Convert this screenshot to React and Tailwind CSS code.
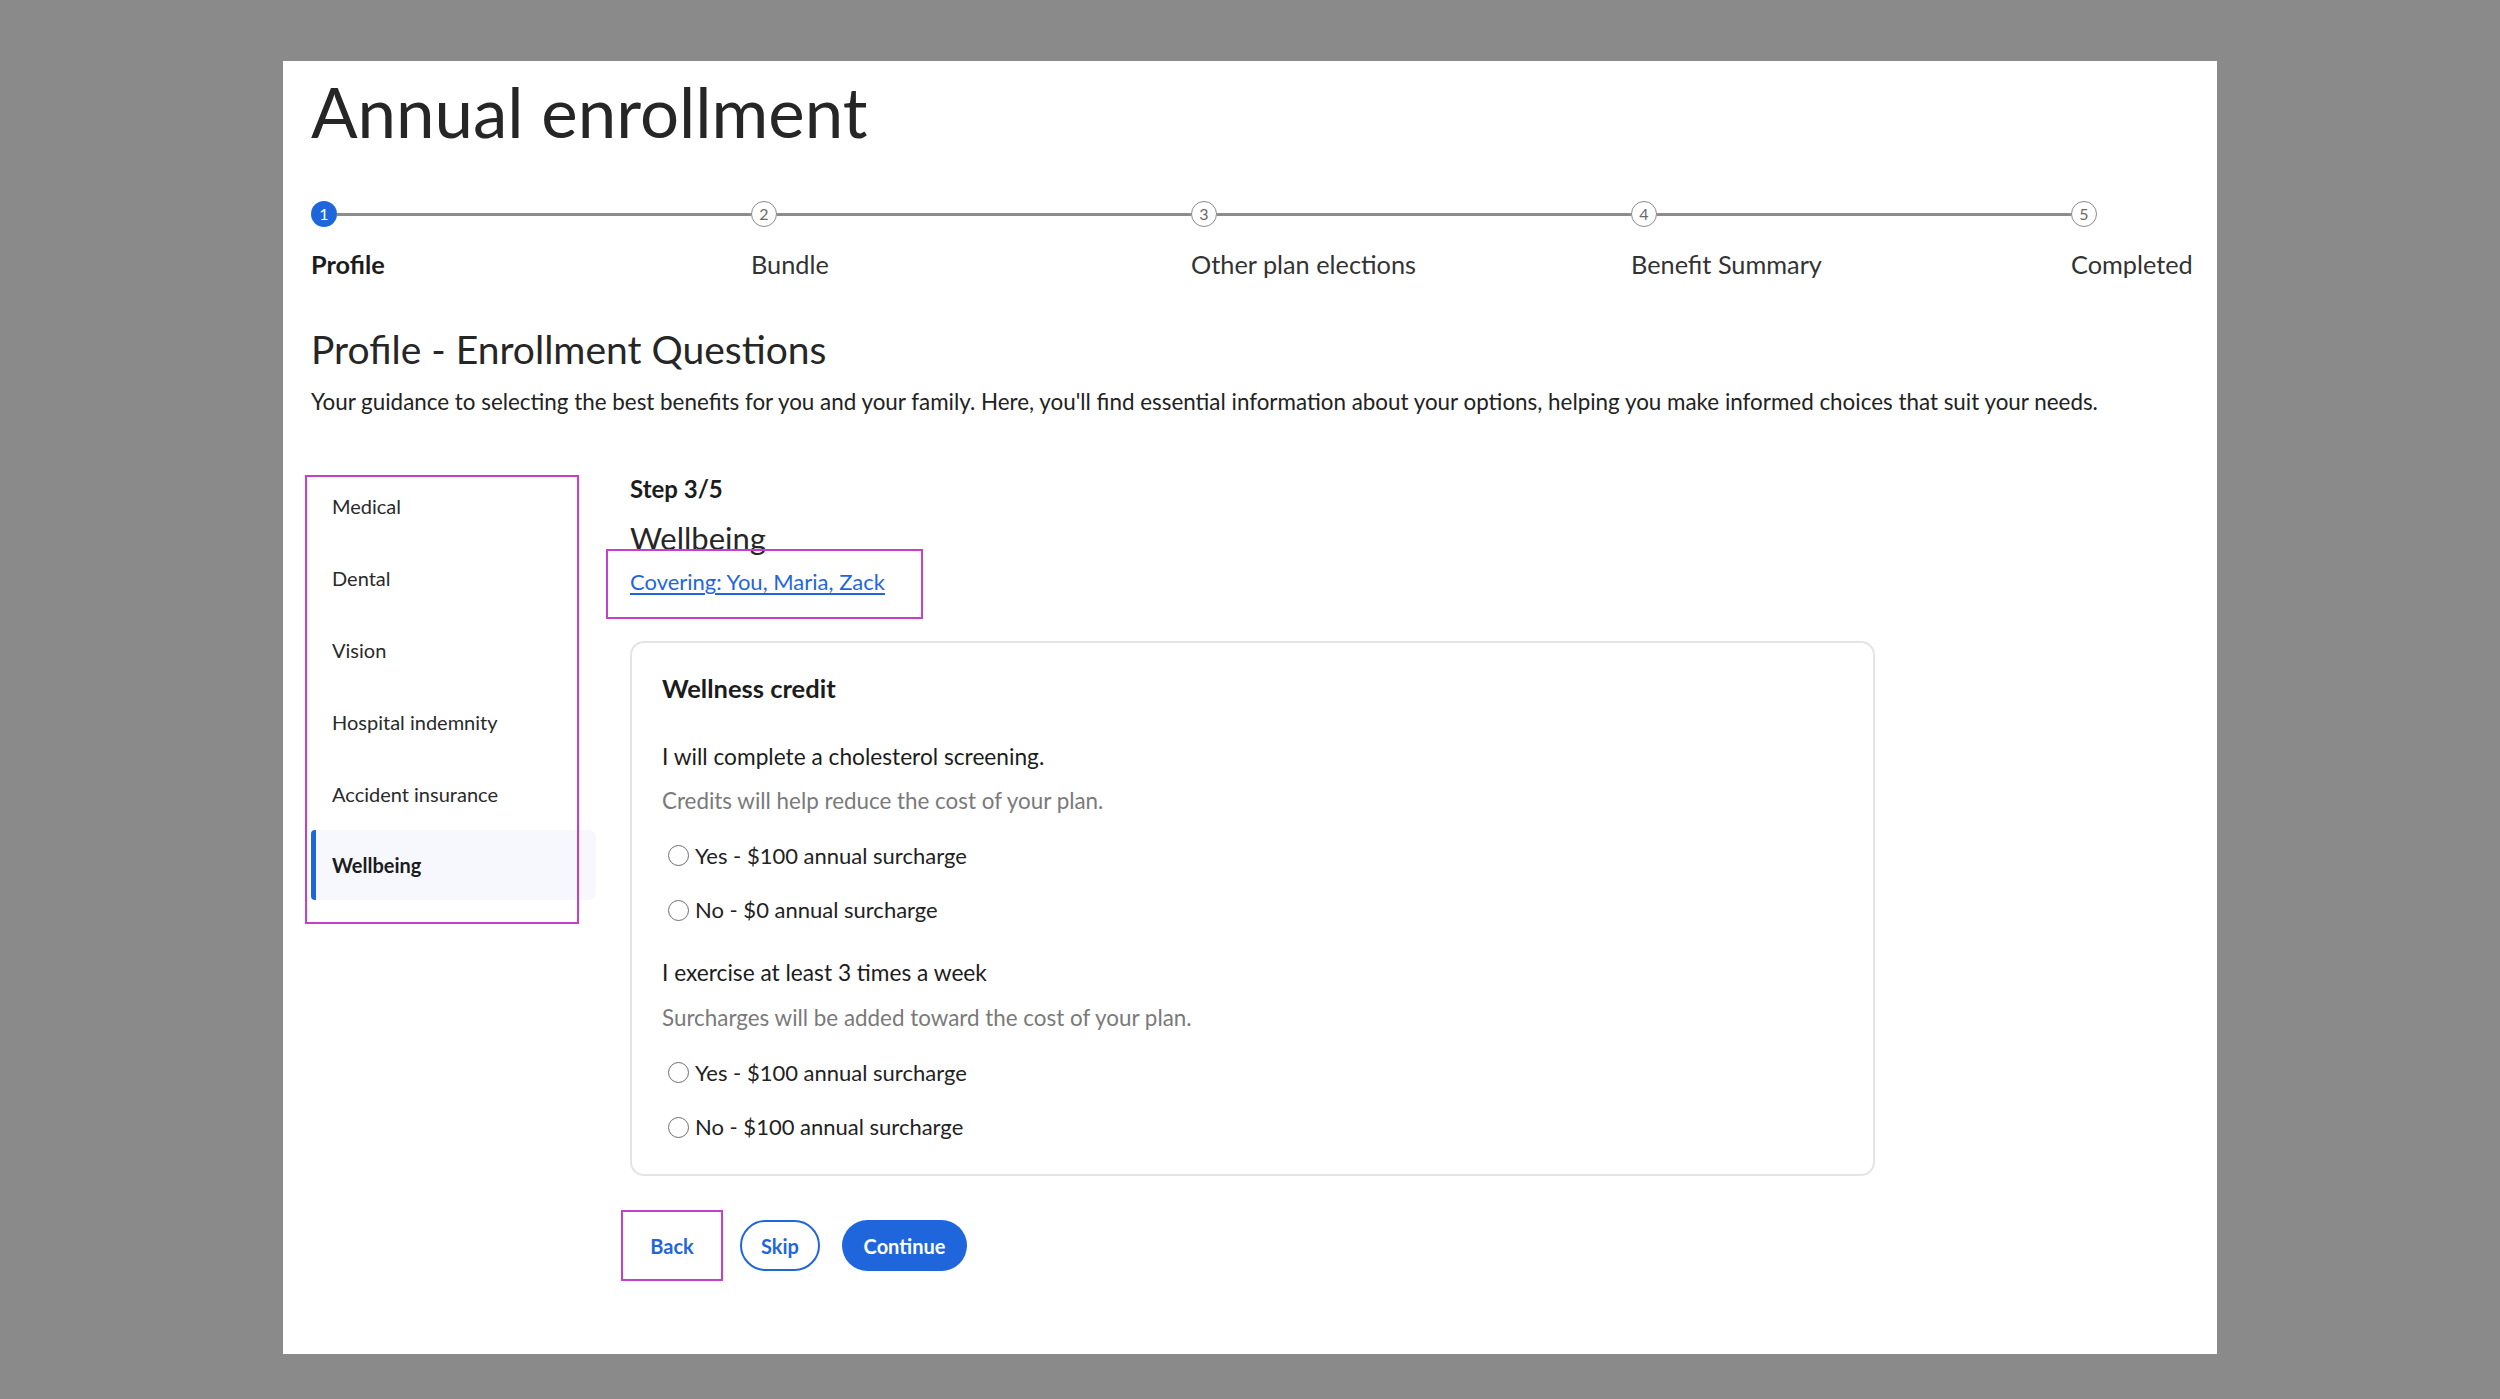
const steps = ['Profile', 'Bundle', 'Other plan elections', 'Benefit Summary', 'Completed']
const navItems = ['Medical', 'Dental', 'Vision', 'Hospital indemnity', 'Accident insurance', 'Wellbeing']

const questions = [
  {
    title: 'I will complete a cholesterol screening.',
    hint: 'Credits will help reduce the cost of your plan.',
    options: ['Yes - $100 annual surcharge', 'No - $0 annual surcharge'],
  },
  {
    title: 'I exercise at least 3 times a week',
    hint: 'Surcharges will be added toward the cost of your plan.',
    options: ['Yes - $100 annual surcharge', 'No - $100 annual surcharge'],
  },
]

function StepCircle({ n, active }) {
  return (
    <div
      className={`w-[26px] h-[26px] shrink-0 rounded-full flex items-center justify-center text-[16px] leading-none ${
        active ? 'bg-[#1f66dd] text-white' : 'bg-white border-[1.5px] border-[#8a8a8a] text-[#6a6a6a]'
      }`}
    >
      {n}
    </div>
  )
}

function Stepper() {
  return (
    <div className="flex mt-[55px]">
      {steps.map((label, i) => {
        const last = i === steps.length - 1
        return (
          <div key={label} className={last ? 'flex-1' : 'w-[440px] shrink-0'}>
            <div className="flex items-center h-[26px]">
              <StepCircle n={i + 1} active={i === 0} />
              {!last && <div className="flex-1 h-[3px] bg-[#8c8c8c]" />}
            </div>
            <div
              className={`mt-[22px] text-[25.3px] leading-[1.2] ${
                i === 0 ? 'font-bold text-[#1c1c1c]' : 'text-[#333]'
              }`}
            >
              {label}
            </div>
          </div>
        )
      })}
    </div>
  )
}

function Radio({ label }) {
  return (
    <label className="flex items-center gap-[6px] text-[22px] leading-[1.2] text-[#222]">
      <span className="ml-[6px] w-[21px] h-[21px] rounded-full border-[1.5px] border-[#6e6e6e] bg-white" />
      {label}
    </label>
  )
}

export default function App() {
  return (
    <div className="min-h-screen bg-[#8a8a8a] pt-[61px] pl-[283px]" style={{ fontFamily: 'Lato, "Noto Sans", sans-serif' }}>
      <div className="w-[1934px] h-[1293px] bg-white px-[28px] pt-[16px]">
        <h1 className="text-[69px] leading-none text-[#262626]">Annual enrollment</h1>

        <Stepper />

        <h2 className="mt-[47px] text-[39px] leading-[1.2] text-[#262626]">Profile - Enrollment Questions</h2>
        <p className="mt-[16px] text-[22.4px] leading-[1.2] text-[#222]">
          Your guidance to selecting the best benefits for you and your family. Here, you'll find essential information
          about your options, helping you make informed choices that suit your needs.
        </p>

        <div className="flex mt-[54px] gap-[34px]">
          {/* Side nav */}
          <nav className="relative w-[285px] shrink-0">
            {navItems.map(item => {
              const active = item === 'Wellbeing'
              return (
                <div
                  key={item}
                  className={`flex items-center text-[20px] ${
                    active
                      ? 'h-[70px] bg-[#f7f8fd] border-l-[5px] border-[#1f66dd] rounded-l-[4px] rounded-r-[8px] pl-[16px] font-bold text-[#1c1c1c]'
                      : 'h-[72px] pl-[21px] text-[#2a2a2a]'
                  }`}
                >
                  {item}
                </div>
              )
            })}
            <div className="absolute left-[-6px] top-[5px] w-[274px] h-[449px] border-2 border-[#c53fcc] pointer-events-none" />
          </nav>

          {/* Main */}
          <div className="flex-1 pt-[5px]">
            <div className="text-[24px] leading-[1.2] font-bold text-[#1c1c1c]">Step 3/5</div>
            <div className="mt-[16px] text-[31px] leading-[1.2] text-[#262626]">Wellbeing</div>
            <div className="relative mt-[12px]">
              <a href="#" className="text-[22px] leading-[1.2] text-[#1f66dd] underline underline-offset-[3px]">
                Covering: You, Maria, Zack
              </a>
              <div className="absolute left-[-24px] top-[-20px] w-[317px] h-[70px] border-2 border-[#c53fcc] pointer-events-none" />
            </div>

            <div className="mt-[45px] w-[1245px] rounded-[14px] border-2 border-[#e4e4e4] pl-[30px] pt-[30px] pb-[34px]">
              <div className="text-[25.5px] leading-[1.2] font-bold text-[#1c1c1c]">Wellness credit</div>
              {questions.map((q, qi) => (
                <div key={qi} className={qi === 0 ? 'mt-[39px]' : 'mt-[36px]'}>
                  <div className="text-[22.7px] leading-[1.2] text-[#1c1c1c]">{q.title}</div>
                  <div className="mt-[18px] text-[22.4px] leading-[1.2] text-[#7a7a7a]">{q.hint}</div>
                  <div className="mt-[28px] flex flex-col gap-[28px]">
                    {q.options.map(o => (
                      <Radio key={o} label={o} />
                    ))}
                  </div>
                </div>
              ))}
            </div>

            <div className="mt-[34px] ml-[-9px] flex items-center">
              <button className="w-[102px] h-[71px] border-2 border-[#c53fcc] text-[20px] font-bold text-[#1f66dd]">
                Back
              </button>
              <button className="ml-[17px] w-[80px] h-[51px] rounded-full border-2 border-[#1f66dd] text-[20px] font-bold text-[#1f66dd]">
                Skip
              </button>
              <button className="ml-[22px] w-[125px] h-[51px] rounded-full bg-[#1f66dd] text-[20px] font-bold text-white">
                Continue
              </button>
            </div>
          </div>
        </div>
      </div>
    </div>
  )
}
